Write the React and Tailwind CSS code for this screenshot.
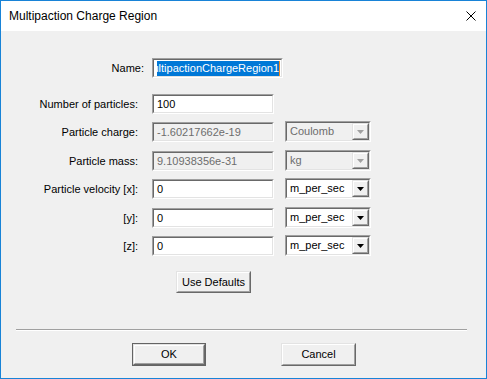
const font = { fontFamily: '"Liberation Sans", Arial, sans-serif' }

function Sunken({ className = '', bg = 'bg-white', children }) {
  return (
    <div className={`border border-t-[#a0a0a0] border-l-[#a0a0a0] border-b-white border-r-white ${className}`}>
      <div className={`h-full flex items-center border border-t-[#696969] border-l-[#696969] border-b-[#e3e3e3] border-r-[#e3e3e3] ${bg}`}>
        {children}
      </div>
    </div>
  )
}

function Raised({ className = '', children }) {
  return (
    <div className={`border border-t-[#e3e3e3] border-l-[#e3e3e3] border-b-[#696969] border-r-[#696969] ${className}`}>
      <div className="h-full flex items-center justify-center border border-t-white border-l-white border-b-[#a0a0a0] border-r-[#a0a0a0] bg-[#f0f0f0]">
        {children}
      </div>
    </div>
  )
}

function Field({ value, width = 'w-[122px]', disabled }) {
  return (
    <Sunken className={`${width} h-[20px]`} bg={disabled ? 'bg-[#f0f0f0]' : 'bg-white'}>
      <span className={`pl-[3px] text-[11px] leading-none ${disabled ? 'text-[#6d6d6d]' : 'text-black'}`}>{value}</span>
    </Sunken>
  )
}

function Combo({ value, disabled }) {
  return (
    <Sunken className="w-[86px] h-[21px] -mt-px ml-[11px]" bg={disabled ? 'bg-[#f0f0f0]' : 'bg-white'}>
      <span className={`flex-1 pl-[3px] text-[11px] leading-none ${disabled ? 'text-[#6d6d6d]' : 'text-black'}`}>{value}</span>
      <Raised className="w-[17px] h-full">
        <svg width="7" height="4" viewBox="0 0 7 4">
          <path d="M0 0h7L3.5 4z" fill={disabled ? '#a0a0a0' : '#000'} />
        </svg>
      </Raised>
    </Sunken>
  )
}

function Row({ label, mt, children }) {
  return (
    <div className={`flex items-start ${mt}`}>
      <div className="w-[137px] h-[20px] flex items-center justify-end text-[11px] text-black">{label}</div>
      <div className="ml-[14px] flex items-start">{children}</div>
    </div>
  )
}

export default function App() {
  return (
    <div style={font} className="w-[487px] h-[379px] border border-[#1883d7] bg-[#f0f0f0] flex flex-col overflow-hidden">
      <div className="h-[30px] bg-white flex items-center justify-between pl-[8px] pr-[10px]">
        <span className="text-[12px] text-black">Multipaction Charge Region</span>
        <svg width="10" height="10" viewBox="0 0 10 10">
          <path d="M0.5 0.5l9 9M9.5 0.5l-9 9" stroke="#000" strokeWidth="1" />
        </svg>
      </div>

      <div className="flex-1 flex flex-col">
        <div className="flex items-start mt-[27px]">
          <div className="w-[143px] h-[20px] flex items-center justify-end text-[11px] text-black">Name:</div>
          <Sunken className="ml-[8px] w-[131px] h-[20px]">
            <div className="flex-1 h-full flex items-center justify-end overflow-hidden pl-[3px] pr-[1px]">
              <div className="flex items-center justify-end overflow-hidden">
                <span className="bg-[#0078d7] text-white text-[11px] leading-[15px] whitespace-nowrap">MultipactionChargeRegion1</span>
              </div>
              <span className="w-px h-[15px] bg-[#f08a24]" />
            </div>
          </Sunken>
        </div>

        <Row label="Number of particles:" mt="mt-[16px]">
          <Field value="100" />
        </Row>
        <Row label="Particle charge:" mt="mt-[8px]">
          <Field value="-1.60217662e-19" disabled />
          <Combo value="Coulomb" disabled />
        </Row>
        <Row label="Particle mass:" mt="mt-[9px]">
          <Field value="9.10938356e-31" disabled />
          <Combo value="kg" disabled />
        </Row>
        <Row label="Particle velocity [x]:" mt="mt-[8px]">
          <Field value="0" />
          <Combo value="m_per_sec" />
        </Row>
        <Row label="[y]:" mt="mt-[9px]">
          <Field value="0" />
          <Combo value="m_per_sec" />
        </Row>
        <Row label="[z]:" mt="mt-[8px]">
          <Field value="0" />
          <Combo value="m_per_sec" />
        </Row>

        <div className="mt-[15px] pl-[175px]">
          <Raised className="w-[75px] h-[22px]">
            <span className="text-[11px] text-black">Use Defaults</span>
          </Raised>
        </div>

        <div className="mt-[36px] ml-[15px] w-[451px] border-t border-t-[#a0a0a0] border-b border-b-white" />

        <div className="mt-[12px] flex items-start">
          <div className="ml-[131px] w-[74px] h-[23px] border border-[#646464]">
            <Raised className="h-full">
              <span className="text-[11px] text-black">OK</span>
            </Raised>
          </div>
          <Raised className="ml-[75px] w-[75px] h-[23px]">
            <span className="text-[11px] text-black">Cancel</span>
          </Raised>
        </div>
      </div>
    </div>
  )
}
